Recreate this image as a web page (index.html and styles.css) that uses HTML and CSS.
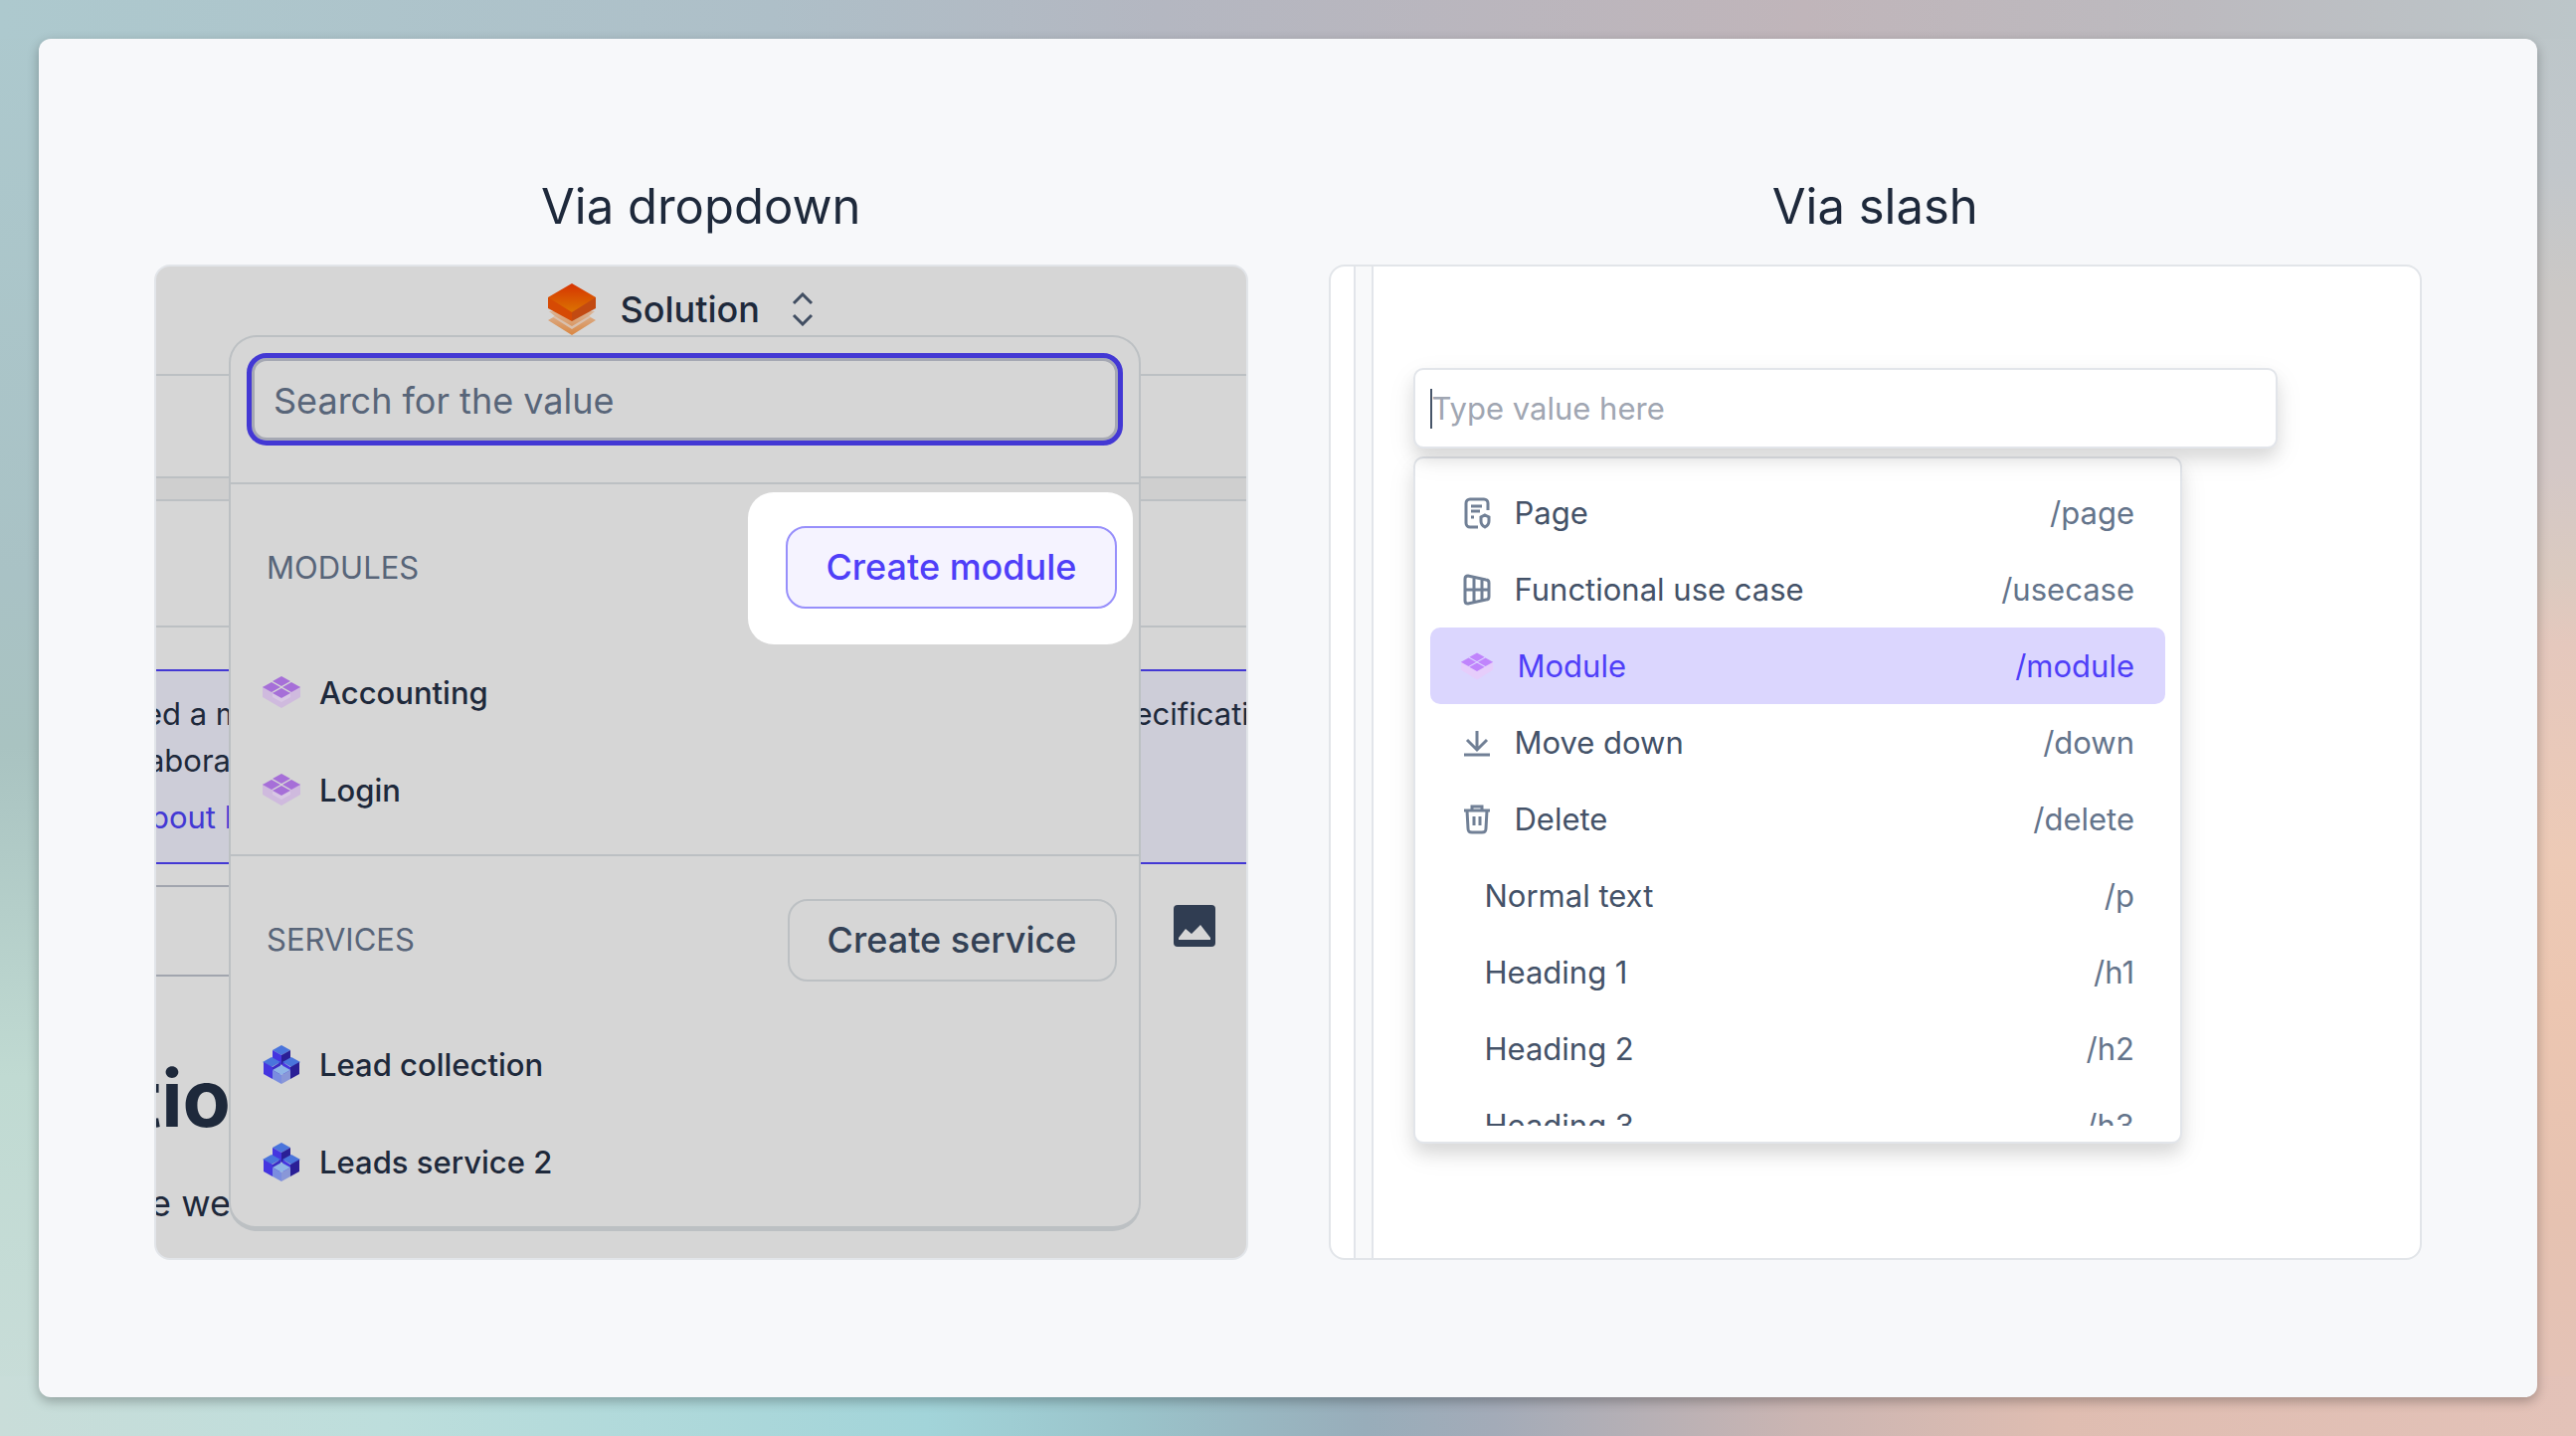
FILE: index.html
```html
<!DOCTYPE html>
<html lang="en">
<head>
<meta charset="utf-8">
<meta name="viewport" content="width=device-width, initial-scale=1">
<title>Create a module</title>
<link rel="stylesheet" href="styles.css">
</head>
<body>
<svg class="sprite" aria-hidden="true">
  <symbol id="module" viewBox="0 0 40 34">
    <path fill="#c9a6e2" opacity=".6" d="M1 11 20 21 39 11v11L20 33 1 22z"/>
    <g fill="#a66fd8">
      <path d="M20 1l9 5-9 5-9-5z"/><path d="M10 7l9 5-9 5-9-5z"/><path d="M30 7l9 5-9 5-9-5z"/><path d="M20 13l9 5-9 5-9-5z"/>
    </g>
    <path fill="#fff" opacity=".2" d="M11 18l9 5v4l-9-5zM29 18l-9 5v4l9-5z"/>
  </symbol>
  <symbol id="service" viewBox="0 0 40 40">
    <path fill="#4a74dc" d="M20 1l9 5-9 5-9-5z"/><path fill="#4535e0" d="M11 6l9 5v10l-9-5z"/><path fill="#2a1f96" d="M29 6l-9 5v10l9-5z"/>
    <path fill="#4a74dc" d="M10 13l9 5-9 5-9-5z"/><path fill="#4535e0" d="M2 18l9 5v12l-9-5z"/><path fill="#3a2cc4" d="M19 18l-8 5v12l8-5z"/>
    <path fill="#4a74dc" d="M30 13l9 5-9 5-9-5z"/><path fill="#4535e0" d="M21 18l8 5v12l-8-5z"/><path fill="#2a1f96" d="M38 18l-9 5v12l9-5z"/>
    <path fill="#8fb4e6" d="M20 21l9 5-9 5-9-5z"/><path fill="#7a8de0" d="M11 26l9 5v9l-9-5z"/><path fill="#8997d8" d="M29 26l-9 5v9l9-5z"/>
  </symbol>
</svg>

<main class="board">
  <section class="column">
    <h2 class="title">Via dropdown</h2>
    <div class="panel panel-dim">
      <div class="backdrop">
        <header class="topbar">
          <svg class="logo" viewBox="0 0 50 52" aria-hidden="true">
            <defs>
              <linearGradient id="top" x1="0" y1="0" x2="0" y2="1"><stop offset="0" stop-color="#d63302"/><stop offset="1" stop-color="#db7402"/></linearGradient>
              <linearGradient id="base" x1="0" y1="0" x2="0" y2="1"><stop offset="0" stop-color="#dab497"/><stop offset="1" stop-color="#da8640"/></linearGradient>
            </defs>
            <path fill="url(#base)" d="M2 28h46l-6 5 7 4-24 15L1 37l7-4z"/>
            <path fill="#d9c0ae" d="M8 33l17 10 17-10 2 1-19 12L6 34z"/>
            <path fill="#d64a04" d="M1 14h24v24L1 25z"/><path fill="#c24a12" d="M49 14H25v24l24-13z"/>
            <path fill="url(#top)" d="M25 0l24 14-24 15L1 14z"/>
          </svg>
          <span class="topbar-name">Solution</span>
          <svg class="updown" viewBox="0 0 22 34" aria-hidden="true"><path d="M2 11l9-9 9 9M2 23l9 9 9-9"/></svg>
        </header>
        <div class="strip strip-a"></div>
        <div class="strip strip-band"></div>
        <div class="strip strip-b"></div>
        <div class="notice">
          <p class="notice-row"><span class="cut-left cut-under">You need a m</span><span class="cut-right">ecification</span></p>
          <p class="notice-row"><span class="cut-left">collabora</span></p>
          <p class="notice-row notice-link"><a class="cut-left cut-under" href="#">about h</a></p>
        </div>
        <div class="field-row">
          <div class="field-line"></div>
          <svg class="picture" viewBox="0 0 42 42" aria-hidden="true"><rect width="42" height="42" rx="4" fill="#303d52"/><path fill="#d6d6d6" d="M5 35v-2l7-9 6 5 9-9 10 13v2z"/></svg>
        </div>
        <p class="heading-row"><span class="cut-left">Solutio</span></p>
        <p class="body-row"><span class="cut-left">e we</span></p>
      </div>

      <div class="dropdown">
        <div class="search-row">
          <input class="search" type="text" placeholder="Search for the value" aria-label="Search for the value">
        </div>
        <section class="group">
          <div class="group-head">
            <h3 class="group-title">MODULES</h3>
            <div class="spotlight"><button class="btn btn-accent" type="button">Create module</button></div>
          </div>
          <ul class="items">
            <li class="item"><svg class="item-icon" viewBox="0 0 40 34"><use href="#module"/></svg>Accounting</li>
            <li class="item"><svg class="item-icon" viewBox="0 0 40 34"><use href="#module"/></svg>Login</li>
          </ul>
        </section>
        <section class="group">
          <div class="group-head">
            <h3 class="group-title">SERVICES</h3>
            <button class="btn" type="button">Create service</button>
          </div>
          <ul class="items">
            <li class="item"><svg class="item-icon" viewBox="0 0 40 40"><use href="#service"/></svg>Lead collection</li>
            <li class="item"><svg class="item-icon" viewBox="0 0 40 40"><use href="#service"/></svg>Leads service 2</li>
          </ul>
        </section>
      </div>
    </div>
  </section>

  <section class="column">
    <h2 class="title">Via slash</h2>
    <div class="panel panel-editor">
      <div class="gutter"></div>
      <div class="editor">
        <div class="editor-box">
          <span class="caret"></span>
          <input class="editor-input" type="text" placeholder="Type value here" aria-label="Type value here">
        </div>
        <div class="menu">
          <ul class="commands">
            <li class="command">
              <svg class="command-icon" viewBox="0 0 28 32"><path d="M25 13V6a4 4 0 0 0-4-4H7a4 4 0 0 0-4 4v20a4 4 0 0 0 4 4h8M8 9h11M8 14h9M8 20h3M22 18l4 2v4c0 3-2 5-4 6-2-1-4-3-4-6v-4z"/></svg>
              <span class="command-name">Page</span><span class="command-key">/page</span></li>
            <li class="command">
              <svg class="command-icon" viewBox="0 0 28 32"><path d="M2 5c0-2 1-3 3-3l18 4c2 0 3 1 3 3v14c0 2-1 3-3 3L5 30c-2 0-3-1-3-3zM2 16h24M11 3v26M19 5v22"/></svg>
              <span class="command-name">Functional use case</span><span class="command-key">/usecase</span></li>
            <li class="command command-active">
              <svg class="command-icon command-module" viewBox="0 0 40 34"><path d="M1 12l19 10 19-10v9L20 33 1 21z"/><g><path d="M20 1l9 5-9 5-9-5z"/><path d="M10 7l9 5-9 5-9-5z"/><path d="M30 7l9 5-9 5-9-5z"/><path d="M20 13l9 5-9 5-9-5z"/></g></svg>
              <span class="command-name">Module</span><span class="command-key">/module</span></li>
            <li class="command">
              <svg class="command-icon" viewBox="0 0 28 32"><path d="M14 4v18M4 13l10 10 10-10M1 28h26"/></svg>
              <span class="command-name">Move down</span><span class="command-key">/down</span></li>
            <li class="command">
              <svg class="command-icon" viewBox="0 0 28 32"><path d="M1 7h26M9 6V3h10v3M4 7l1 18c0 3 1 4 4 4h10c3 0 4-1 4-4l1-18M11 13v9M17 13v9"/></svg>
              <span class="command-name">Delete</span><span class="command-key">/delete</span></li>
            <li class="command command-plain"><span class="command-name">Normal text</span><span class="command-key">/p</span></li>
            <li class="command command-plain"><span class="command-name">Heading 1</span><span class="command-key">/h1</span></li>
            <li class="command command-plain"><span class="command-name">Heading 2</span><span class="command-key">/h2</span></li>
            <li class="command command-plain"><span class="command-name">Heading 3</span><span class="command-key">/h3</span></li>
          </ul>
        </div>
      </div>
    </div>
  </section>
</main>
</body>
</html>
```
FILE: styles.css
```css
* { box-sizing: border-box; }

/* Only the margin round the board shows, so each side has its own gradient */
body {
  margin: 0;
  min-height: 100vh;
  padding: 39px;
  font-family: Inter, "Liberation Sans", sans-serif;
  color: #1e293b;
  background:
    linear-gradient(to right, #adc9ce, #aebfc8 30%, #b4b7c1 45%, #c0b5ba 70%, #bcbabf 85%, #bcc6c9) top / 100% 39px no-repeat,
    linear-gradient(to right, #c9ddd9, #bddedc 15%, #a2d4d9 36%, #9ac3ca 44%, #98adba 53%, #a3abb8 58%, #cbb5b2 70%, #dfbdb1 80%, #e3c2b8) bottom / 100% 60px no-repeat,
    linear-gradient(to bottom, #adc9ce, #a9c2c5 40%, #a9c3c1 52%, #c0dad2 75%, #c9ddd9) left / 50% 100% no-repeat,
    linear-gradient(to bottom, #bcc6c9, #c2c7cb 12%, #cbc8c6 20%, #d4c8c6 33%, #dbcac0 40%, #e5c8bd 45%, #edcab6 60%, #ecc6b1 70%, #e6c2b1 85%, #e3c2b8) right / 50% 100% no-repeat;
}

h2, h3, p, ul { margin: 0; padding: 0; font-weight: inherit; }
ul { list-style: none; }
button, input { font: inherit; }
.sprite { position: absolute; width: 0; height: 0; }

.board {
  display: grid;
  grid-template-columns: 1fr 1fr;
  gap: 81px;
  min-height: calc(100vh - 78px);
  padding: 137px 116px 138px;
  border-radius: 12px;
  background: #f7f8fa;
  box-shadow: 0 4px 12px rgba(0, 0, 0, .28);
}
.column { display: flex; flex-direction: column; min-width: 0; }
.title {
  height: 90px;
  font-size: 49px;
  line-height: 64px;
  text-align: center;
}
.panel {
  position: relative;
  flex: 1;
  overflow: hidden;
  border: 2px solid #e2e5e9;
  border-radius: 16px;
}

/* Dimmed page with the open dropdown */
.panel-dim { background: #d6d6d6; }
.topbar {
  display: flex;
  justify-content: center;
  gap: 24px;
  height: 110px;
  padding: 17px 42px 0 0;
  border-bottom: 2px solid #bcc0c3;
  font-size: 36px;
  font-weight: 500;
  line-height: 52px;
}
.logo { width: 50px; height: 52px; }
.updown { width: 22px; height: 34px; margin: 9px 0 0 8px; }
.updown path { fill: none; stroke: #414e62; stroke-width: 3; }
.strip { border-bottom: 2px solid #bcc0c3; }
.strip-a { height: 103px; }
.strip-band { height: 23px; background: #cfcfcf; }
.strip-b { height: 127px; }
.notice {
  height: 196px;
  margin-top: 42px;
  padding-top: 19px;
  border: solid #4338d4;
  border-width: 2px 0;
  background: #cdcdd8;
  font-size: 31px;
  line-height: 47px;
}
.notice-row { display: flex; justify-content: space-between; }
.notice-link { margin-top: 10px; color: #4338d4; }
.notice-link a { color: inherit; text-decoration: none; }
.cut-left { display: flex; justify-content: flex-end; width: 75px; white-space: nowrap; }
.cut-under { width: 87px; }
.cut-right { width: 112px; white-space: nowrap; }
.field-row {
  display: flex;
  justify-content: space-between;
  height: 92px;
  margin-top: 21px;
  padding-right: 31px;
}
.field-line {
  width: 50%;
  border: solid #a1a5ae;
  border-width: 2px 0;
}
.picture { width: 42px; height: 42px; margin-top: 20px; }
.heading-row { margin-top: 72px; font-size: 79px; font-weight: 700; line-height: 100px; }
.body-row { margin-top: 32px; font-size: 36px; line-height: 48px; }

.dropdown {
  position: absolute;
  top: 69px;
  left: 73px;
  right: 106px;
  border: 2px solid #bcc0c3;
  border-bottom-width: 5px;
  border-radius: 28px;
  background: #d6d6d6;
}
.search-row { padding: 16px 16px 37px; }
.search {
  display: block;
  width: 100%;
  height: 93px;
  padding: 2px 22px 0;
  border: 5px solid #4338d4;
  border-radius: 20px;
  outline: 0;
  background: transparent;
  box-shadow: inset 0 0 0 3px #a5a8b3;
  font-size: 36px;
}
.search::placeholder { color: #586579; opacity: 1; }
.group { border-top: 2px solid #bcc0c3; }
.group-head {
  display: flex;
  align-items: center;
  justify-content: space-between;
  height: 160px;
  padding: 8px 22px 0 36px;
}
.group-title { color: #586579; font-size: 31px; line-height: 40px; }
.spotlight {
  margin-right: -16px;
  padding: 34px 16px 36px 38px;
  border-radius: 26px;
  background: #fff;
}
.btn {
  height: 83px;
  padding: 0 38px;
  border: 2px solid #bcc0c3;
  border-radius: 20px;
  background: transparent;
  color: #334155;
  font-size: 36px;
  font-weight: 500;
}
.btn-accent { border-color: #978ffb; background: #f5f3ff; color: #4f3ff8; }
.items { padding-bottom: 16px; }
.item {
  display: flex;
  align-items: center;
  gap: 18px;
  height: 98px;
  padding-left: 31px;
  font-size: 31px;
  font-weight: 500;
}
.item-icon { width: 40px; height: 40px; }

/* Editor with the slash menu */
.panel-editor { display: flex; background: #fff; }
.gutter {
  flex: none;
  width: 20px;
  margin-left: 23px;
  border: solid #e2e5ea;
  border-width: 0 2px;
  background: #f8f9fa;
}
.editor { flex: 1; padding: 102px 143px 0 40px; }
.editor-box, .menu {
  border: 2px solid #e2e5ea;
  border-radius: 10px;
  background: #fff;
}
.editor-box {
  position: relative;
  display: flex;
  align-items: center;
  height: 81px;
  padding: 0 15px;
  box-shadow: 0 10px 16px rgba(0, 0, 0, .1), 0 10px 30px rgba(0, 0, 0, .07);
}
.caret { width: 2px; height: 40px; background: #475569; }
.editor-input {
  flex: 1;
  padding: 0;
  border: 0;
  outline: 0;
  background: transparent;
  font-size: 31px;
}
.editor-input::placeholder { color: #a0a6b2; opacity: 1; }
.menu {
  height: 691px;
  margin: 8px 96px 0 0;
  padding: 16px 15px;
  box-shadow: 0 10px 16px rgba(0, 0, 0, .1), 0 10px 30px rgba(0, 0, 0, .07);
}
.commands { height: 100%; overflow: hidden; }
.command {
  display: flex;
  align-items: center;
  height: 77px;
  padding: 0 31px 0 33px;
  border-radius: 10px;
  color: #445268;
  font-size: 31px;
}
.command-plain { padding-left: 55px; }
.command-icon { width: 28px; height: 32px; margin-right: 24px; }
.command-icon path { fill: none; stroke: #718096; stroke-width: 3; }
.command-name { flex: 1; }
.command-key { color: #64748b; }
.command-active { padding-left: 30px; background: #dbd6fe; color: #4f3ff8; }
.command-active .command-key { color: inherit; }
.command-module { width: 34px; }
.command-module path { fill: #c084fc; stroke: none; }
.command-module > path { fill: #e6cdfb; }
```
